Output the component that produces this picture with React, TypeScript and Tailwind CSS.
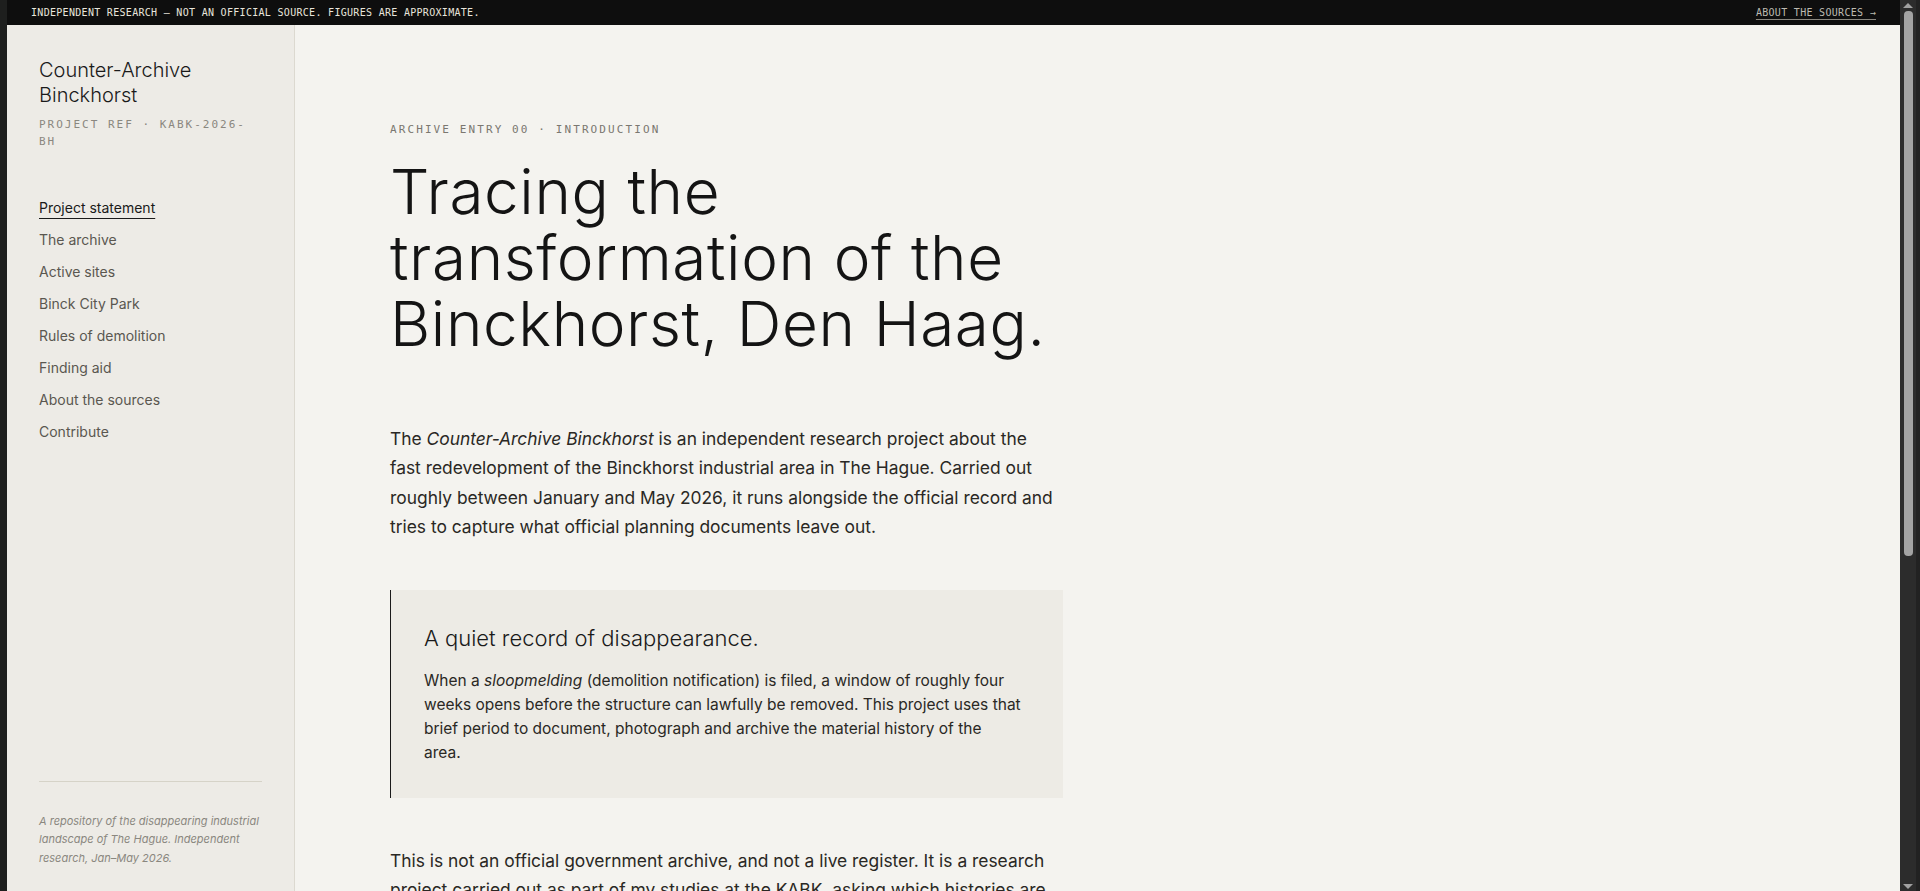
import React from "react";

const navItems = [
  { label: "Project statement", active: true },
  { label: "The archive" },
  { label: "Active sites" },
  { label: "Binck City Park" },
  { label: "Rules of demolition" },
  { label: "Finding aid" },
  { label: "About the sources" },
  { label: "Contribute" },
];

const mono = "font-['DejaVu_Sans_Mono',monospace]";
const sans = "font-['Inter',sans-serif]";

const TopBar = () => (
  <header
    className={`flex h-[25px] shrink-0 items-center justify-between bg-[#0e0e0e] px-6 text-[10px] uppercase tracking-[0.3px] ${mono}`}
  >
    <span className="text-[#e8e5dc]">
      Independent research — not an official source. Figures are approximate.
    </span>
    <a className="text-[#bdbab1] underline decoration-[#8a877f] underline-offset-[3px]">
      About the sources →
    </a>
  </header>
);

const Sidebar = () => (
  <aside className="flex w-[288px] shrink-0 flex-col border-r border-[#dcd9d0] bg-[#edebe6] px-8 pt-[33px] pb-6">
    <h1 className={`text-[20px] leading-[25px] font-light text-[#1a1a1a] ${sans}`}>
      Counter-Archive Binckhorst
    </h1>
    <p
      className={`mt-2 text-[11px] leading-[17px] uppercase tracking-[2px] text-[#8a877f] ${mono}`}
    >
      Project ref · KABK-2026-
      <br />
      BH
    </p>

    <nav className={`mt-[48px] flex flex-col gap-3 text-[14px] leading-5 ${sans}`}>
      {navItems.map((item) => (
        <a
          key={item.label}
          className={
            item.active
              ? "self-start text-[#1a1a1a] underline decoration-[#1a1a1a] underline-offset-[5px]"
              : "self-start text-[#5a5750]"
          }
        >
          {item.label}
        </a>
      ))}
    </nav>

    <div className="mt-auto border-t border-[#d6d3c8] pt-[30px]">
      <p
        className={`whitespace-nowrap text-[11px] leading-[18.5px] italic text-[#8a877f] ${sans}`}
      >
        A repository of the disappearing industrial
        <br />
        landscape of The Hague. Independent
        <br />
        research, Jan–May 2026.
      </p>
    </div>
  </aside>
);

const Statement = () => (
  <main className="min-w-0 flex-1 overflow-hidden bg-[#f4f3ef] pt-[97px] pl-[95px]">
    <div className="max-w-[673px]">
      <p className={`text-[11px] leading-4 uppercase tracking-[2.1px] text-[#7a7770] ${mono}`}>
        Archive entry 00 · Introduction
      </p>

      <h2
        className={`mt-[21px] text-[62px] leading-[66px] font-light tracking-[0.6px] text-[#141414] ${sans}`}
      >
        Tracing the transformation of the Binckhorst, Den Haag.
      </h2>

      <p className={`mt-[67px] pr-[6px] text-[17.4px] leading-[29.4px] text-[#2a2824] ${sans}`}>
        The <em>Counter-Archive Binckhorst</em> is an independent research project about the
        fast redevelopment of the Binckhorst industrial area in The Hague. Carried out
        roughly between January and May 2026, it runs alongside the official record and
        tries to capture what official planning documents leave out.
      </p>

      <blockquote className="my-12 border-l border-[#1a1a1a] bg-[#edebe5] py-[33px] pr-9 pl-[33px]">
        <h3 className={`text-[22px] leading-[30px] font-light text-[#1a1a1a] ${sans}`}>
          A quiet record of disappearance.
        </h3>
        <p className={`mt-4 text-[15.5px] leading-6 text-[#2a2824] ${sans}`}>
          When a <em>sloopmelding</em> (demolition notification) is filed, a window of roughly four
          weeks opens before the structure can lawfully be removed. This project uses that
          brief period to document, photograph and archive the material history of the
          <br />
          area.
        </p>
      </blockquote>

      <p className={`pr-[6px] text-[17.4px] leading-[29.4px] text-[#2a2824] ${sans}`}>
        This is not an official government archive, and not a live register. It is a research
        project carried out as part of my studies at the KABK, asking which histories are
        kept, and which are quietly left behind as the area changes.
      </p>
    </div>
  </main>
);

const Scrollbar = () => (
  <div className="flex w-[20px] shrink-0 bg-[#222222]">
    <div className="flex w-[16px] flex-col items-center bg-[#2c2c2c]">
      <div className="mt-[3px] h-0 w-0 border-x-[5px] border-b-[5px] border-x-transparent border-b-[#a0a0a0]" />
      <div className="mt-[3px] h-[545px] w-[9px] rounded-[4px] bg-[#a3a3a3]" />
      <div className="mt-auto mb-[2px] h-0 w-0 border-x-[5px] border-t-[5px] border-x-transparent border-t-[#a0a0a0]" />
    </div>
  </div>
);

export default function App() {
  return (
    <div className="flex h-screen w-full overflow-hidden bg-[#1e1e1e]">
      <div className="w-[7px] shrink-0 bg-[#1e1f1e]" />
      <div className="flex min-w-0 flex-1 flex-col">
        <TopBar />
        <div className="flex min-h-0 flex-1">
          <Sidebar />
          <Statement />
        </div>
      </div>
      <Scrollbar />
    </div>
  );
}
